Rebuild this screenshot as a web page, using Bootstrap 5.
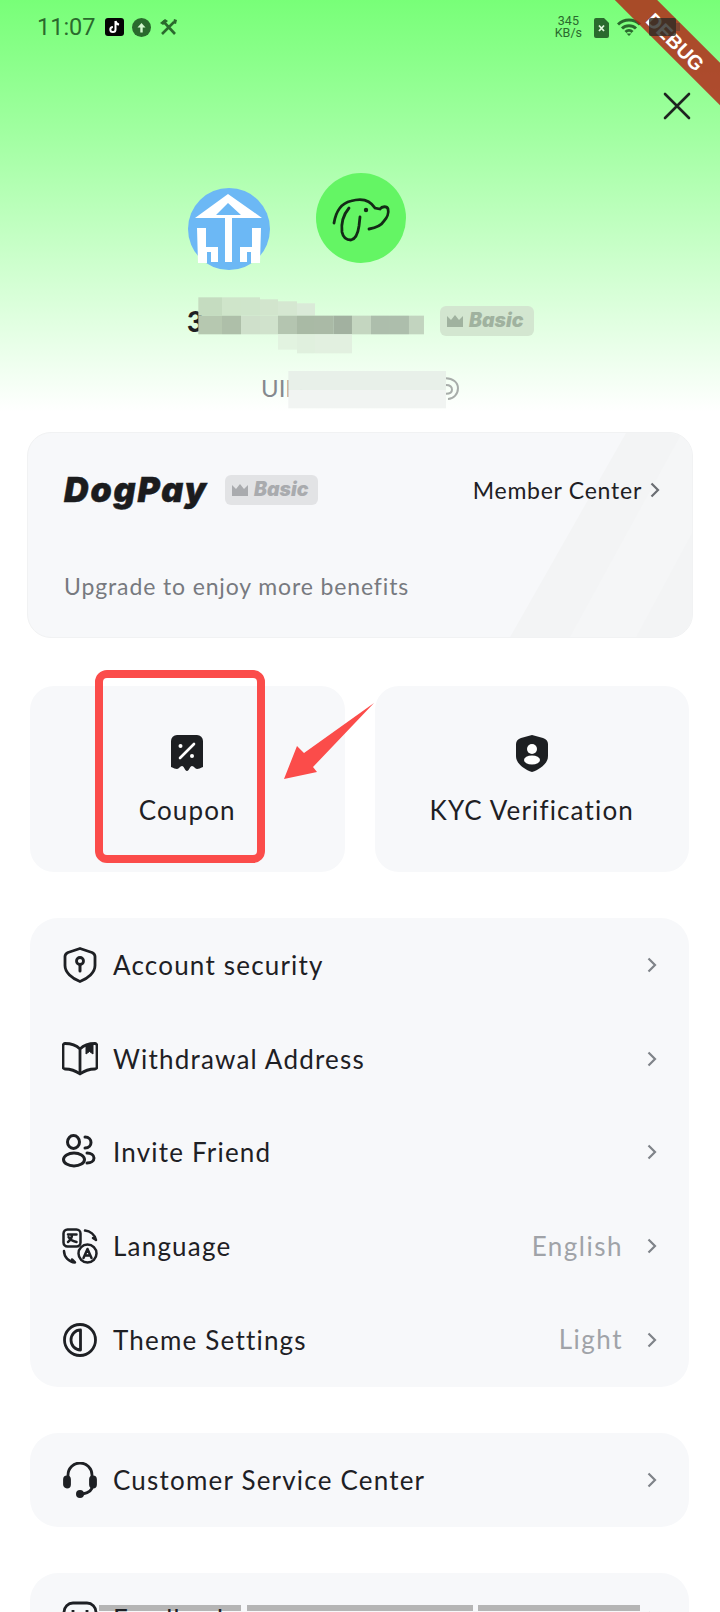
<!DOCTYPE html>
<html lang="en">
<head>
  <meta charset="UTF-8">
  <title>DogPay – Me</title>
  <link href="https://cdn.jsdelivr.net/npm/bootstrap@5.3.0/dist/css/bootstrap.min.css" rel="stylesheet">
  <style>
    html, body { height: 1612px; overflow: hidden; }
    body { background: #fff; font-family: "Lato", "Noto Sans", sans-serif; color: #1e2024; position: relative; }

    /* header with green fade */
    .top-area { height: 432px; background: linear-gradient(180deg, #78ff78 0, #a0ffa0 130px, #ccffcc 260px, #ffffff 412px); }
    .status-row { height: 52px; padding: 14px 40px 0 37px; color: #2a6a2d; }
    .clock { font-family: Roboto, sans-serif; font-size: 23.5px; line-height: 26px; margin-right: 9px; }
    .status-ico { margin-top: 4px; flex: none; }
    .batt-ico { position: relative; z-index: 4; }
    .speed-txt { font-family: Roboto, sans-serif; font-size: 12.5px; line-height: 12px; text-align: center; margin: 1px 12px 0 0; }
    .close-row { height: 64px; padding: 40px 29px 0 0; }
    .logo-row { height: 104px; margin-top: 57px; padding-left: 187px; }
    .logo-home { width: 84px; height: 84px; margin-top: 14px; margin-right: 45px; }
    .logo-dog { width: 90px; height: 90px; }
    .name-row { height: 30px; margin-top: 29px; padding-left: 187px; }
    .name-txt { font-size: 28px; font-weight: 900; line-height: 30px; width: 253px; }
    .tier-chip { display: inline-flex; align-items: center; gap: 6px; height: 30px; padding: 0 7px; border-radius: 6px; font-family: Inter, sans-serif; font-size: 19.5px; font-weight: 900; font-style: italic; white-space: nowrap; }
    .tier-head { width: 94px; background: #d3e6d0; color: #a0b29f; }
    .uid-row { margin-top: 37px; padding-left: 261px; height: 30px; font-size: 24px; line-height: 30px; color: #85898e; }

    /* member card */
    .member-box { position: relative; overflow: hidden; height: 206px; margin: 0 27px; padding: 39px 32px 0 36px; background: #f7f8fa; border: 1px solid #f1f2f3; border-radius: 24px; }
    .member-stripes { position: absolute; top: 0; right: 0; }
    .member-top, .member-sub { position: relative; }
    .brand-txt { font-family: Inter, sans-serif; font-size: 34px; font-weight: 900; font-style: italic; line-height: 36px; letter-spacing: 1.9px; -webkit-text-stroke: .5px #1b1c1e; color: #1b1c1e; width: 161px; }
    .tier-card { width: 93px; background: #e2e3e5; color: #a9abae; }
    .center-txt { font-size: 23px; letter-spacing: .75px; line-height: 30px; }
    .member-sub { margin-top: 63px; font-size: 23px; letter-spacing: .87px; line-height: 30px; color: #777a80; }
    .chev { display: block; flex: none; }

    /* tiles */
    .tile-row { margin: 48px 31px 0 30px; gap: 30px; }
    .tile-box { flex: 1 1 0; height: 186px; background: #f7f8fa; border-radius: 24px; padding-top: 49px; }
    .tile-icon { display: block; margin: 0 auto; }
    .tile-label { margin-top: 20px; font-size: 26px; line-height: 36px; letter-spacing: 1.15px; }

    /* settings groups */
    .group-box { margin: 46px 31px 0 30px; background: #f7f8fa; border-radius: 28px; }
    .set-row { height: 93.75px; padding: 0 32px; }
    .set-icon { width: 36px; height: 36px; margin-right: 15px; flex: none; }
    .set-label { font-size: 26px; letter-spacing: 1.2px; line-height: 34px; }
    .set-value { font-size: 26px; letter-spacing: 1.5px; color: #a0a3a8; margin-right: 24px; }
    .label-front { position: relative; z-index: 2; }

    /* things laid over the screenshot */
    .over-layer { position: absolute; top: 0; left: 0; pointer-events: none; z-index: 1; }
    .debug-corner { position: absolute; top: 0; right: 0; width: 120px; height: 130px; overflow: hidden; z-index: 3; }
    .debug-ribbon { position: absolute; top: 25px; left: -24px; width: 200px; height: 30px; padding-left: 2px; text-align: center; transform: rotate(45deg); background: rgba(180, 30, 20, .8); color: #fff; font: 700 20px/35px "Liberation Sans", sans-serif; }
  </style>
</head>
<body>

  <!-- шапка -->
  <div class="top-area">
    <div class="status-row d-flex align-items-start">
      <span class="clock">11:07</span>
      <svg class="status-ico me-2" width="19" height="18" viewBox="0 0 19 18"><rect width="19" height="18" rx="3" fill="#050505"/><path d="M10.500 3v8.500a2.600 2.600 0 1 1-2.600-2.600M10.500 3c.3 2 1.700 3.300 3.600 3.500" fill="none" stroke="#fff" stroke-width="2"/></svg>
      <svg class="status-ico me-2" width="19" height="19" viewBox="0 0 19 19"><circle cx="9.500" cy="9.500" r="9.500" fill="#2a6a2d"/><path d="M9.500 14.500V8" stroke="#d4f7cf" stroke-width="2.400"/><path d="M5.500 9.500l4-4.500 4 4.500z" fill="#d4f7cf"/></svg>
      <svg class="status-ico" width="19" height="18" viewBox="0 0 19 18" fill="none" stroke="#2a6a2d" stroke-width="2.600"><path d="M4 3l12 13M15 4L3 16"/><path d="M1 5l5-4 3 2-5 4zM18 2l-1 4-3-1 1-4z" fill="#2a6a2d" stroke="none"/></svg>
      <div class="ms-auto d-flex align-items-start">
        <div class="speed-txt">345<br>KB/s</div>
        <svg class="status-ico me-2" width="15" height="20" viewBox="0 0 15 20"><path d="M2 0h8l5 5v13a2 2 0 0 1-2 2H2a2 2 0 0 1-2-2V2a2 2 0 0 1 2-2z" fill="#2a6a2d"/><path d="M5 7.500l5 5.500M10 7.500L5 13" stroke="#e2f7dc" stroke-width="1.800"/></svg>
        <svg class="status-ico" width="24" height="18" viewBox="0 0 24 18" fill="none" stroke="#2a6a2d" stroke-width="3"><path d="M1 6.500a16 16 0 0 1 22 0M5 10.500a10 10 0 0 1 14 0M8.500 14a5 5 0 0 1 7 0"/><path d="M9.500 15.500h5L12 18z" fill="#2a6a2d" stroke="none"/></svg>
        <svg class="status-ico batt-ico ms-2" width="31" height="18" viewBox="0 0 31 18"><rect width="27" height="18" rx="2" fill="#2a2a26" fill-opacity=".8"/><rect x="27" y="5" width="4" height="8" fill="#3c3c36" fill-opacity=".4"/></svg>
      </div>
    </div>
    <div class="close-row d-flex justify-content-end">
      <svg width="28" height="28" viewBox="0 0 28 28" fill="none" stroke="#1e2420" stroke-width="2.600" stroke-linecap="round"><path d="M2 2l24 24M26 2L2 26"/></svg>
    </div>
    <div class="logo-row d-flex align-items-start">
      <svg class="logo-home" viewBox="0 0 84 84">
        <circle cx="42" cy="42" r="41" fill="#6cb8f5"/>
        <path d="M8 31L41 7l34 24zM29 28h25L41 16z" fill="#fff" fill-rule="evenodd"/>
        <path d="M38 28h7v47h-7zM10 41h9v19h12v15h-7V65h-4v11h-9zM74 41h-9v19H53v15h7V65h4v11h9z" fill="#fff"/>
      </svg>
      <svg class="logo-dog" viewBox="0 0 90 90">
        <circle cx="45" cy="45" r="45" fill="#64f564"/>
        <path d="M18 50c2-12 8-20 17-22 10-3 19-1 24 7l5 1c2-3 7-3 8 0 1 4-1 9-4 12-3 5-9 7-15 8M33 35c-5 6-8 15-7 24 1 5 4 8 9 8 5-1 7-7 8-14l1-9" fill="none" stroke="#132a16" stroke-width="2.800" stroke-linecap="round"/>
        <circle cx="50" cy="37" r="2.200" fill="#132a16"/>
      </svg>
    </div>
    <div class="name-row d-flex align-items-center">
      <div class="name-txt">3</div>
      <span class="tier-chip tier-head">
        <svg width="16" height="12" viewBox="0 0 16 12" fill="#a0b29f"><path d="M0 1l4 4 4-5 4 5 4-4v11H0z"/></svg>Basic
      </span>
    </div>
    <div class="uid-row">UID</div>
  </div>

  <!-- картка учасника -->
  <div class="member-box">
    <svg class="member-stripes" width="190" height="206" viewBox="0 0 190 206">
      <path d="M7 206L124 0h66v206z" fill="#f3f4f5"/>
      <path d="M67 206L180 0h10v206z" fill="#f5f6f7"/>
      <path d="M133 206L190 100v106z" fill="#f3f4f5"/>
    </svg>
    <div class="member-top d-flex align-items-center">
      <span class="brand-txt">DogPay</span>
      <span class="tier-chip tier-card">
        <svg width="16" height="12" viewBox="0 0 16 12" fill="#a9abae"><path d="M0 1l4 4 4-5 4 5 4-4v11H0z"/></svg>Basic
      </span>
      <span class="center-txt ms-auto me-2">Member Center</span>
      <svg class="chev" width="10" height="16" viewBox="0 0 10 16" fill="none" stroke="#6b6e73" stroke-width="2.200"><path d="M1.500 1.500L8 8l-6.500 6.500"/></svg>
    </div>
    <div class="member-sub">Upgrade to enjoy more benefits</div>
  </div>

  <!-- плитки -->
  <div class="tile-row d-flex">
    <div class="tile-box text-center">
      <svg class="tile-icon" width="32" height="37" viewBox="0 0 32 37">
        <path d="M6 0h20a6 6 0 0 1 6 6v26c-3 1-4 2-6 2s-3-3-5-3-3 5-5 5-3-5-5-5-3 3-5 3-3-1-6-2V6a6 6 0 0 1 6-6z" fill="#1d1f22"/>
        <path d="M9 23L23 9" stroke="#fff" stroke-width="2.600" stroke-linecap="round"/>
        <circle cx="9.500" cy="11" r="2" fill="#fff"/><circle cx="21" cy="21" r="2" fill="#fff"/>
      </svg>
      <div class="tile-label">Coupon</div>
    </div>
    <div class="tile-box text-center">
      <svg class="tile-icon" width="32" height="37" viewBox="0 0 32 37">
        <path d="M16 0l11 3c3 1 5 3 5 6v12c0 7-7 13-16 16C7 34 0 28 0 21V9c0-3 2-5 5-6z" fill="#1d1f22"/>
        <circle cx="16" cy="14" r="5" fill="#fff"/><ellipse cx="16" cy="25" rx="8" ry="4.500" fill="#fff"/>
      </svg>
      <div class="tile-label">KYC Verification</div>
    </div>
  </div>

  <!-- налаштування -->
  <div class="group-box">
    <div class="set-row d-flex align-items-center">
      <svg class="set-icon" viewBox="0 0 36 36" fill="none" stroke="#1e2024" stroke-width="2.800" stroke-linejoin="round"><path d="M18 1.500l12 4c2 1 3 2 3 4v9c0 7-7 13-15 16C10 31.500 3 25.500 3 18.500v-9c0-2 1-3 3-4z"/><circle cx="18" cy="14" r="3.500"/><path d="M18 17.500V24" stroke-linecap="round" stroke-width="3"/></svg>
      <span class="set-label">Account security</span>
      <svg class="chev ms-auto" width="10" height="16" viewBox="0 0 10 16" fill="none" stroke="#7f8389" stroke-width="2.200"><path d="M1.500 1.500L8 8l-6.500 6.500"/></svg>
    </div>
    <div class="set-row d-flex align-items-center">
      <svg class="set-icon" viewBox="0 0 36 36" fill="none" stroke="#1e2024" stroke-width="2.800" stroke-linejoin="round"><path d="M18 8C14 4 8 2.500 3 2.500c-1 0-2 1-2 2V26c0 1 1 2 2 2 6 0 11 2 15 5 4-3 9-5 15-5 1 0 2-1 2-2V4.500c0-1-1-2-2-2-6 0-11 1.500-15 5.500zM18 8v25"/><path d="M24 4.500V13l3.500-2.500L31 13V3z" fill="#1e2024" stroke-width="1"/></svg>
      <span class="set-label">Withdrawal Address</span>
      <svg class="chev ms-auto" width="10" height="16" viewBox="0 0 10 16" fill="none" stroke="#7f8389" stroke-width="2.200"><path d="M1.500 1.500L8 8l-6.500 6.500"/></svg>
    </div>
    <div class="set-row d-flex align-items-center">
      <svg class="set-icon" viewBox="0 0 36 36" fill="none" stroke="#1e2024" stroke-width="3" stroke-linecap="round"><ellipse cx="11.500" cy="8" rx="6" ry="6.500"/><ellipse cx="12" cy="25.500" rx="10.500" ry="6.500"/><path d="M23 3c4 0 6 3 6 5.500S27 14 23 14M25 19c4 0 7 2 7 5s-3 5-7 5"/></svg>
      <span class="set-label">Invite Friend</span>
      <svg class="chev ms-auto" width="10" height="16" viewBox="0 0 10 16" fill="none" stroke="#7f8389" stroke-width="2.200"><path d="M1.500 1.500L8 8l-6.500 6.500"/></svg>
    </div>
    <div class="set-row d-flex align-items-center">
      <svg class="set-icon" viewBox="0 0 36 36" fill="none" stroke="#1e2024" stroke-width="2.500" stroke-linecap="round" stroke-linejoin="round"><rect x="1.500" y="1.500" width="17" height="17" rx="4"/><path d="M6 6.500h8.500M10 6.500c0 4-2 6-4 7.500M6.500 9c1 2 4 4 8 5"/><circle cx="25.500" cy="25.500" r="9"/><path d="M21.500 30l4-9 4 9M23 27.500h5"/><path d="M23 2.500c5 .5 10 4 11 9.500l-3-2M2 23c0 6 5 11 11 11.500l-3-3"/></svg>
      <span class="set-label">Language</span>
      <span class="set-value ms-auto">English</span>
      <svg class="chev" width="10" height="16" viewBox="0 0 10 16" fill="none" stroke="#7f8389" stroke-width="2.200"><path d="M1.500 1.500L8 8l-6.500 6.500"/></svg>
    </div>
    <div class="set-row d-flex align-items-center">
      <svg class="set-icon" viewBox="0 0 36 36" fill="none" stroke="#1e2024" stroke-width="2.800"><circle cx="18" cy="18" r="15.500"/><path d="M18.500 8C13 8 9 12.500 9 18s4 10 9.500 10z" stroke-linejoin="round"/></svg>
      <span class="set-label">Theme Settings</span>
      <span class="set-value ms-auto">Light</span>
      <svg class="chev" width="10" height="16" viewBox="0 0 10 16" fill="none" stroke="#7f8389" stroke-width="2.200"><path d="M1.500 1.500L8 8l-6.500 6.500"/></svg>
    </div>
  </div>

  <div class="group-box">
    <div class="set-row d-flex align-items-center">
      <svg class="set-icon" viewBox="0 0 36 36" fill="none" stroke="#1e2024" stroke-width="2.800" stroke-linecap="round"><path d="M6 19v-6a12 12 0 0 1 24 0v6M30.500 23c0 5-4 8-10 9"/><rect x="2.500" y="15" width="5" height="10" rx="2.500" fill="#1e2024"/><rect x="28.500" y="15" width="5" height="10" rx="2.500" fill="#1e2024"/><circle cx="18" cy="32" r="2.600" fill="#1e2024"/></svg>
      <span class="set-label">Customer Service Center</span>
      <svg class="chev ms-auto" width="10" height="16" viewBox="0 0 10 16" fill="none" stroke="#7f8389" stroke-width="2.200"><path d="M1.500 1.500L8 8l-6.500 6.500"/></svg>
    </div>
  </div>

  <div class="group-box">
    <div class="set-row d-flex align-items-center">
      <svg class="set-icon label-front" viewBox="0 0 36 36" fill="none" stroke="#1e2024" stroke-width="2.800"><rect x="2" y="2" width="32" height="32" rx="9"/><path d="M11 9v4M25 9v4"/></svg>
      <span class="set-label label-front">Feedback</span>
      <svg class="chev ms-auto" width="10" height="16" viewBox="0 0 10 16" fill="none" stroke="#7f8389" stroke-width="2.200"><path d="M1.500 1.500L8 8l-6.500 6.500"/></svg>
    </div>
  </div>

  <!-- замазані дані, стрілка та банер поверх сторінки -->
  <svg class="over-layer" width="720" height="1612" viewBox="0 0 720 1612">
    <g transform="translate(160 160) scale(.3333)">
      <rect x="115" y="412" width="71" height="55" fill="#c5dcc0"/><rect x="186" y="412" width="57" height="55" fill="#cfe5ca"/><rect x="243" y="412" width="57" height="55" fill="#cfe5cb"/><rect x="300" y="418" width="54" height="49" fill="#d2e5cd"/><rect x="354" y="424" width="57" height="43" fill="#d5e7d1"/><rect x="411" y="430" width="54" height="37" fill="#daead8"/>
      <rect x="115" y="467" width="71" height="56" fill="#b6c8b0"/><rect x="186" y="467" width="57" height="56" fill="#aebfa9"/><rect x="243" y="467" width="57" height="56" fill="#cfe0cb"/><rect x="300" y="467" width="54" height="56" fill="#d0e2cc"/><rect x="354" y="467" width="57" height="56" fill="#b4c5b0"/><rect x="411" y="467" width="54" height="56" fill="#a9baa5"/><rect x="465" y="467" width="55" height="56" fill="#aabaa6"/><rect x="520" y="467" width="56" height="56" fill="#a2b1a0"/><rect x="576" y="467" width="57" height="56" fill="#c4d6c0"/><rect x="633" y="467" width="57" height="56" fill="#adbeac"/><rect x="690" y="467" width="57" height="56" fill="#adbeac"/><rect x="747" y="467" width="45" height="56" fill="#c2d4bf"/>
      <rect x="354" y="523" width="57" height="46" fill="#e2f3e0"/><rect x="411" y="523" width="54" height="57" fill="#e0f0de"/><rect x="465" y="523" width="111" height="57" fill="#e2f0e0"/>
      <path d="M858 655c20 0 36 12 36 30s-14 32-30 32M858 675c12 0 18 6 18 14s-6 12-18 12" fill="none" stroke="#a8adaa" stroke-width="6"/>
      <rect x="385" y="633" width="473" height="57" fill="#e8f0e9"/><rect x="385" y="690" width="473" height="55" fill="#f1f4f2"/>
    </g>
    <rect x="99" y="674" width="162" height="185" rx="8" fill="none" stroke="#fb4c4a" stroke-width="8"/>
    <path d="M284 779L297 746l7 7 70-50-61 64 4 5z" fill="#fb4c4a"/>
    <g fill="#b5b5b5"><rect x="99" y="1605" width="142" height="6"/><rect x="247" y="1605" width="226" height="6"/><rect x="478" y="1605" width="162" height="6"/></g>
  </svg>
  <div class="debug-corner"><div class="debug-ribbon">DEBUG</div></div>

  <script src="https://cdn.jsdelivr.net/npm/bootstrap@5.3.0/dist/js/bootstrap.bundle.min.js"></script>
</body>
</html>
